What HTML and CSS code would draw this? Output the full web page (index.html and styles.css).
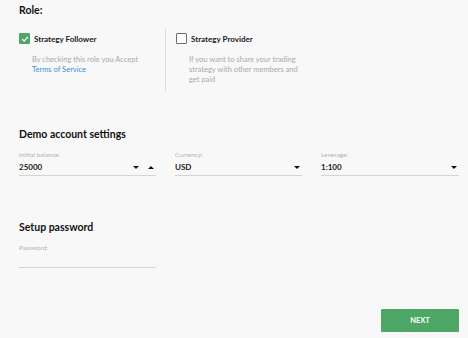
FILE: index.html
```html
<!DOCTYPE html>
<html lang="en">
<head>
    <meta charset="UTF-8">
    <title>Account setup</title>
<link rel="stylesheet" href="styles.css">
</head>
<body>
    <div class="page">
        <h2 class="section-title">Role:</h2>
        <div class="roles">
            <div class="role">
                <div class="role-head">
                    <span class="check checked">
                        <svg viewBox="0 0 10 10" width="8" height="8"><path d="M1.5 5.2 L4 7.6 L8.6 2.4" fill="none" stroke="#fff" stroke-width="1.6"/></svg>
                    </span>
                    <span class="role-name">Strategy Follower</span>
                </div>
                <p class="role-desc">By checking this role you Accept<br><a href="#" class="link">Terms of Service</a></p>
            </div>
            <div class="role role-right">
                <div class="role-head">
                    <span class="check"></span>
                    <span class="role-name">Strategy Provider</span>
                </div>
                <p class="role-desc">If you want to share your trading<br>strategy with other members and<br>get paid</p>
            </div>
        </div>

        <h2 class="section-title demo-title">Demo account settings</h2>
        <div class="fields">
            <div class="field field-balance">
                <label class="field-label">Initial balance:</label>
                <div class="field-input">
                    <span class="value">25000</span>
                    <span class="arrows"><span class="tri down"></span><span class="tri up"></span></span>
                </div>
            </div>
            <div class="field field-currency">
                <label class="field-label">Currency:</label>
                <div class="field-input">
                    <span class="value">USD</span>
                    <span class="tri down"></span>
                </div>
            </div>
            <div class="field field-leverage">
                <label class="field-label">Leverage:</label>
                <div class="field-input">
                    <span class="value">1:100</span>
                    <span class="tri down"></span>
                </div>
            </div>
        </div>

        <h2 class="section-title pass-title">Setup password</h2>
        <div class="field field-balance">
            <label class="field-label">Password:</label>
            <div class="field-input pass-input"></div>
        </div>

        <div class="actions">
            <button class="btn-next">NEXT</button>
        </div>
    </div>
</body>
</html>
```

FILE: styles.css
```css
* {
    margin: 0;
    padding: 0;
    box-sizing: border-box;
}

body {
    font-family: Lato, "Open Sans", sans-serif;
    background-color: #f8f8f8;
    color: #1a1a1a;
    width: 468px;
    height: 338px;
    overflow: hidden;
}

.page {
    padding: 3px 9px 0 19px;
    display: flex;
    flex-direction: column;
}

.section-title {
    font-size: 10.5px;
    font-weight: 700;
    line-height: 14px;
    color: #111;
}

/* Roles */
.roles {
    display: flex;
    margin-top: 12px;
    height: 63px;
}

.role {
    width: 146px;
}

.role-right {
    border-left: 1px solid #dcdcdc;
    padding-left: 10px;
    width: 220px;
}

.role-head {
    display: flex;
    align-items: center;
    gap: 4px;
    margin-top: 4px;
}

.check {
    width: 11px;
    height: 11px;
    border: 1px solid #6d6d6d;
    border-radius: 1px;
    background: #fff;
    display: flex;
    align-items: center;
    justify-content: center;
}

.check.checked {
    background: #4fa767;
    border-color: #4fa767;
}

.role-name {
    font-size: 8px;
    font-weight: 700;
    color: #1a1a1a;
}

.role-desc {
    margin-top: 11px;
    padding-left: 13px;
    font-size: 7.5px;
    line-height: 10px;
    color: #a9a9a9;
}

.link {
    color: #3d8fd6;
    text-decoration: none;
}

/* Fields */
.demo-title {
    margin-top: 35px;
}

.fields {
    display: flex;
    gap: 19px;
}

.field {
    display: flex;
    flex-direction: column;
    margin-top: 10px;
}

.field-balance {
    width: 137px;
}

.field-currency {
    width: 127px;
}

.field-leverage {
    width: 138px;
}

.field-label {
    font-size: 6.5px;
    color: #b3b3b3;
    line-height: 8px;
}

.field-input {
    display: flex;
    align-items: center;
    justify-content: space-between;
    height: 17px;
    border-bottom: 1px solid #d4d4d4;
    padding-right: 2px;
}

.value {
    font-size: 8px;
    font-weight: 700;
    color: #1a1a1a;
}

.arrows {
    display: flex;
    gap: 9px;
}

.tri {
    width: 0;
    height: 0;
    border-left: 3px solid transparent;
    border-right: 3px solid transparent;
}

.tri.down {
    border-top: 3px solid #111;
}

.tri.up {
    border-bottom: 3px solid #111;
}

.pass-title {
    margin-top: 44px;
}

.pass-input {
    height: 16px;
}

/* Button */
.actions {
    display: flex;
    justify-content: flex-end;
    margin-top: 41px;
}

.btn-next {
    width: 78px;
    height: 23px;
    background-color: #4fa767;
    color: #fff;
    border: none;
    border-radius: 1px;
    font-family: inherit;
    font-size: 7.5px;
    font-weight: 700;
    cursor: pointer;
}
```
